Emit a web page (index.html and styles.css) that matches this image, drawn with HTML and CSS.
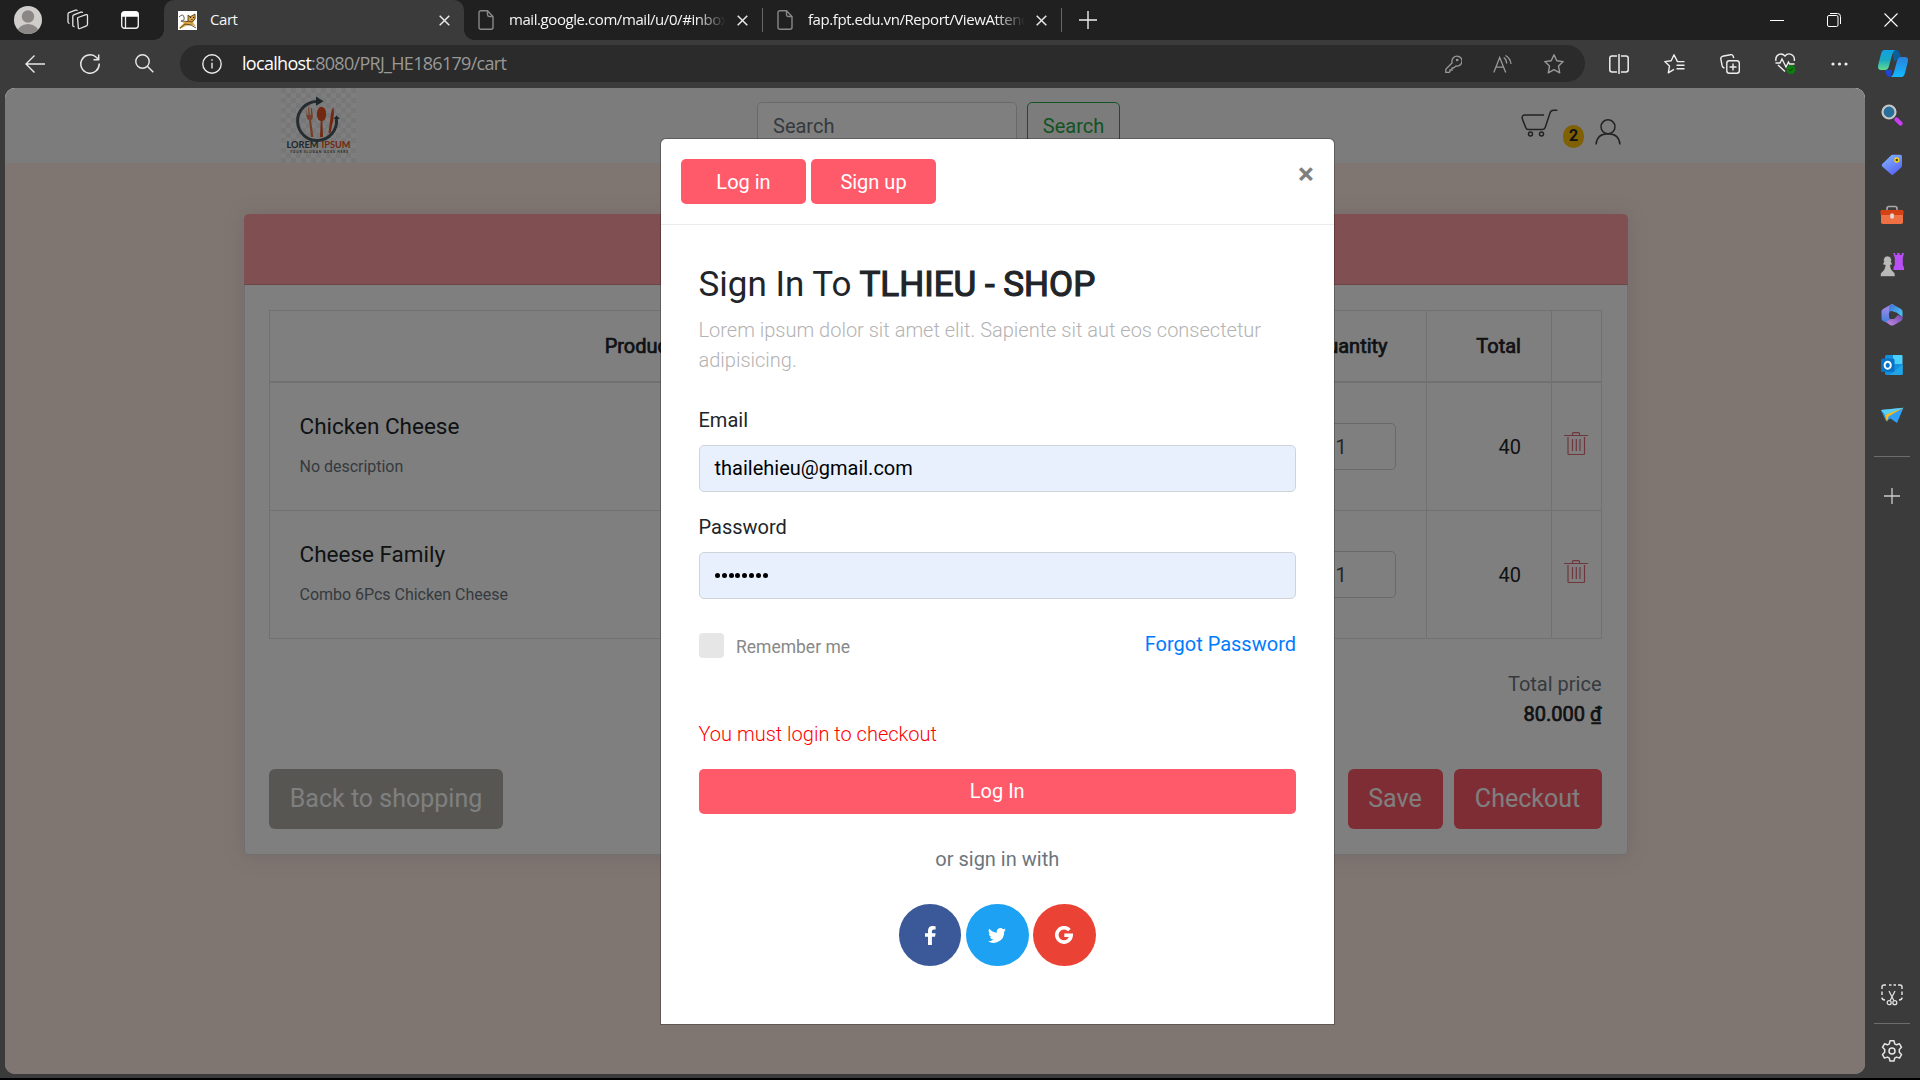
FILE: index.html
```html
<!DOCTYPE html>
<html lang="en">
<head>
<meta charset="utf-8">
<title>Cart</title>
<link rel="stylesheet" href="styles.css">
</head>
<body>
<div class="browser">
  <div class="tabbar">
    <div class="tab-tools">
      <svg class="avatar" width="28" height="28" viewBox="0 0 28 28"><defs><clipPath id="av"><circle cx="14" cy="14" r="14"/></clipPath></defs><g clip-path="url(#av)"><rect width="28" height="28" fill="#d0cecb"/><circle cx="14" cy="10.500" r="6.200" fill="#8b8784"/><ellipse cx="14" cy="27" rx="11" ry="9" fill="#8b8784"/></g></svg>
      <svg width="22" height="22" viewBox="0 0 22 22" fill="none" stroke="#e4e4e4" stroke-width="1.300" stroke-linejoin="round"><path d="M11 8.500l8-2.800q1.500-.4 1.500 1v8.500q0 1.200-1 1.600l-6.500 2.700q-1.700.6-1.700-1l-.7-8.600q-.1-1 .4-1.400z"/><path d="M7.500 17.500q-1.700.3-1.700-1.300V7.500q0-1.200 1-1.600l7-2.700q1.500-.5 1.700.8"/><path d="M2.500 14.500Q1 14 1 12.800V5.200Q1 4 2 3.600l6.500-2.400q1.500-.5 1.800.6"/></svg>
      <svg width="18" height="18" viewBox="0 0 18 18"><rect x=".7" y=".7" width="16.600" height="16.600" rx="2.800" fill="none" stroke="#eee" stroke-width="1.400"/><path d="M.5 5.800V3Q.5.500 3 .5h12q2.500 0 2.500 2.500v2.800z" fill="#fff"/><path d="M4.500 5v12" stroke="#eee" stroke-width="1.300"/></svg>
    </div>
    <div class="tab active">
      <svg width="19" height="19" viewBox="0 0 19 19"><rect width="19" height="19" fill="#fff"/><path d="M2 10q4 2 8-.5L10 4l3 1 4-2 .5 5-2.500 3.500 3 4-4-1.500-6 .8L2 18l-1-1 5-5z" fill="#d9a441"/><path d="M1 6q4-4 5 0t-3 4m7-6l2 2 5-3v5l-3 3-4-1zM2 17l5-4 6 1 5 3M3 10l7 .5" fill="none" stroke="#44351d" stroke-width=".8"/><path d="M12 6.500h1m2 0h1m-2.500 2h1" stroke="#222"/></svg>
      <span class="tab-title">Cart</span>
      <svg class="x" width="11" height="11" viewBox="0 0 11 11"><path d="M.7.7l9.600 9.600M10.300.7L.7 10.300"/></svg>
    </div>
    <div class="tab">
      <svg width="16" height="20" viewBox="0 0 16 20" fill="none" stroke="#888" stroke-width="1.400"><path d="M3 .8h6.500L15 6.500v10.700q0 2-2 2H3q-2 0-2-2V2.800q0-2 2-2zM9.500.8v4q0 1.700 1.700 1.700H15"/></svg>
      <span class="tab-title fade">mail.google.com/mail/u/0/#inbox</span>
      <svg class="x" width="11" height="11" viewBox="0 0 11 11"><path d="M.7.7l9.600 9.600M10.300.7L.7 10.300"/></svg>
    </div>
    <div class="tab">
      <svg width="16" height="20" viewBox="0 0 16 20" fill="none" stroke="#888" stroke-width="1.400"><path d="M3 .8h6.500L15 6.500v10.700q0 2-2 2H3q-2 0-2-2V2.800q0-2 2-2zM9.500.8v4q0 1.700 1.700 1.700H15"/></svg>
      <span class="tab-title fade">fap.fpt.edu.vn/Report/ViewAttend</span>
      <svg class="x" width="11" height="11" viewBox="0 0 11 11"><path d="M.7.7l9.600 9.600M10.300.7L.7 10.300"/></svg>
    </div>
    <svg class="newtab" width="18" height="18" viewBox="0 0 18 18" stroke="#eee" stroke-width="1.400"><path d="M9 0v18M0 9h18"/></svg>
    <div class="window-controls">
      <svg width="14" height="14" viewBox="0 0 14 14" stroke="#fff"><path d="M0 7.500h14"/></svg>
      <svg width="14" height="14" viewBox="0 0 14 14" fill="none" stroke="#fff"><rect x=".5" y="2.500" width="10.500" height="11" rx="1.500"/><path d="M3 .5h7.500q3 0 3 3V11"/></svg>
      <svg width="14" height="14" viewBox="0 0 14 14" stroke="#fff" stroke-width="1.100"><path d="M.5.5l13 13M13.500.5l-13 13"/></svg>
    </div>
  </div>

  <div class="toolbar">
    <div class="nav-buttons">
      <svg width="20" height="18" viewBox="0 0 20 18" fill="none" stroke="#e8e8e8" stroke-width="1.400"><path d="M20 9H1M9.500.5L1 9l8.500 8.500"/></svg>
      <svg width="20" height="20" viewBox="0 0 20 20" fill="none" stroke="#e8e8e8" stroke-width="1.500"><path d="M19.200 9.500A9.200 9.200 0 1 1 16.500 3.500L18.500 5.500M18.700.5v5.200h-5.200"/></svg>
      <svg width="19" height="19" viewBox="0 0 19 19" fill="none" stroke="#e8e8e8" stroke-width="1.400"><circle cx="7.500" cy="7.500" r="6.700"/><path d="M12.300 12.300l6 6"/></svg>
    </div>
    <div class="address">
      <svg width="20" height="20" viewBox="0 0 20 20" fill="none" stroke="#e8e8e8" stroke-width="1.400"><circle cx="10" cy="10" r="9.200"/><path d="M10 8.800v5.700M10 5.300v1.500"/></svg>
      <span class="url"><b>localhost</b>:8080/PRJ_HE186179/cart</span>
      <div class="address-tools">
        <svg width="17" height="18" viewBox="0 0 17 18" fill="none" stroke="#999" stroke-width="1.300"><path d="M7 6.500a5 5 0 1 1 4 4.500l-2.500 2H7v2H5v1.500l-1 1H.8v-3.200L7 8z"/><circle cx="12.200" cy="5" r=".7"/></svg>
        <svg width="20" height="18" viewBox="0 0 20 18" fill="none" stroke="#999" stroke-width="1.300"><path d="M.8 17.500L6.700 2.500l6 15M3 12.200h7.600M10.700 2.500q2.800 1.800 3 6M12.500.5q5 3 5.500 8.500"/></svg>
        <svg width="20" height="20" viewBox="0 0 20 20" fill="none" stroke="#999" stroke-width="1.400" stroke-linejoin="round"><path d="M10 .8l2.800 6 6.400.8-4.700 4.500 1.200 6.700-5.700-3.200-5.700 3.200 1.200-6.700L.8 7.600l6.400-.8z"/></svg>
      </div>
    </div>
    <div class="actions">
      <svg width="20" height="20" viewBox="0 0 20 20" fill="none" stroke="#eee" stroke-width="1.500"><path d="M8 2H3Q.8 2 .8 4.200v11.600Q.8 18 3 18h5M12 2h5q2.200 0 2.200 2.200v11.600q0 2.200-2.200 2.200h-5M10 0v20"/></svg>
      <svg width="21" height="20" viewBox="0 0 21 20" fill="none" stroke="#eee" stroke-width="1.400" stroke-linejoin="round"><path d="M20.500 7.600h-7L10 .8 7.200 6.800.8 7.600l4.700 4.500-1.200 6.700 5.700-3.500M12.500 11.200h8M12.500 14.800h8"/></svg>
      <svg width="20" height="20" viewBox="0 0 20 20" fill="none" stroke="#eee" stroke-width="1.400"><rect x="6.800" y="6.800" width="12.500" height="12.500" rx="2.500"/><path d="M13 9.500v7M9.500 13h7M4.500 14q-1.800-.3-2.300-2L.8 5Q.5 3 2.500 2.300l8-1.600q2.200-.3 2.700 1.500l.5 2"/></svg>
      <svg width="21" height="21" viewBox="0 0 21 21" fill="none" stroke="#eee" stroke-width="1.400"><path d="M1 8q-1-5 3-6.700 3.500-1.200 6 1.700 2.500-3 6-1.700Q20 3 19.300 8M3 12l7 6.500M.5 10H5l2-4 4 8 2.500-5 1 2h5"/><circle cx="16" cy="16.500" r="4.500" fill="#107c10" stroke="none"/><path d="M14 16.500l1.400 1.400 2.500-2.700" stroke="#0b360b" stroke-width="1"/></svg>
      <svg width="17" height="4" viewBox="0 0 17 4" fill="#eee"><circle cx="2" cy="2" r="1.600"/><circle cx="8.500" cy="2" r="1.600"/><circle cx="15" cy="2" r="1.600"/></svg>
    </div>
    <svg class="copilot" width="30" height="27" viewBox="0 0 30 27"><defs><linearGradient id="c1" x1="0" y1="0" x2="0" y2="1"><stop offset="0" stop-color="#0fa2e6"/><stop offset=".5" stop-color="#19a9c0"/><stop offset="1" stop-color="#63db91"/></linearGradient><linearGradient id="c2" x1="0" y1="0" x2="0" y2="1"><stop offset="0" stop-color="#2b80dc"/><stop offset="1" stop-color="#12baff"/></linearGradient></defs><path d="M14 0h4q3 0 3.700 3l1 3.500L16 12z" fill="#0a5f9b"/><path d="M7 20h7l-1.500 7q-3.500 0-4.200-3z" fill="#1d46d9"/><path d="M6.500 0H17q-2 1-3 5l-3 11q-1 4-4 4H3Q-.7 20 .2 15L3 4Q4 0 6.500 0z" fill="url(#c1)"/><path d="M23.500 27H13q2-1 3-5l3-11q1-4 4-4h4q3.700 0 2.800 5L27 23q-1 4-3.500 4z" fill="url(#c2)"/></svg>
  </div>

  <div class="workspace">
    <div class="viewport">
      <div class="site-header">
        <svg class="logo" width="75" height="75" viewBox="0 0 75 75"><defs><pattern id="chk" width="10" height="10" patternUnits="userSpaceOnUse"><rect width="10" height="10" fill="#fcfcfc"/><path d="M0 0h5v5H0zM5 5h5v5H5z" fill="#efefef"/></pattern></defs><rect width="75" height="75" fill="url(#chk)"/><path d="M36 13.500A19.500 19.500 0 1 0 55.500 31" fill="none" stroke="#4a5b62" stroke-width="3"/><path d="M35 8.500l7.500 4.800-7.500 4.500zM52.500 31l3-3.500 3.500 3.500z" fill="#3a4e55"/><g fill="#e65022"><path d="M25.500 20l1 7h1l-.5-7.500h1l1 7.500h1l-.3-7h1l1.300 8q0 3-2 4l2.500 17h-2.500L28 32q-2.500-1-2.500-4z" fill="#e87c55"/><ellipse cx="40.500" cy="26" rx="4.700" ry="7.300"/><path d="M39.800 32h1.500l.7 17h-3zM52.500 19q1.200 9-1.500 19l-1.500 7h-2l2-16q1-8 3-10z"/></g><text x="5.500" y="60" font-size="9" textLength="32" lengthAdjust="spacingAndGlyphs" class="logo-text dark">LOREM</text><text x="40.500" y="60" font-size="9" textLength="29" lengthAdjust="spacingAndGlyphs" class="logo-text orange">IPSUM</text><text x="9" y="64.500" font-size="3.200" textLength="58" class="logo-text dark">YOUR SLOGAN GOES HERE</text></svg>
        <div class="search">
          <div class="field search-field">Search</div>
          <div class="search-button">Search</div>
        </div>
        <div class="user-tools">
          <svg width="37" height="28" viewBox="0 0 37 28" fill="none" stroke="#444" stroke-width="1.500" stroke-linecap="round"><path d="M22.500 6H4Q.8 6 1.200 9.500l3.500 9q.7 2 2.500 2H21q2.500 0 3.200-2L29 4q.9-2.800 3.500-2.800h3.300"/><circle cx="9.500" cy="25" r="2"/><circle cx="20.500" cy="25" r="2"/></svg>
          <span class="count">2</span>
          <svg class="person" width="26" height="26" viewBox="0 0 26 26" fill="none" stroke="#444" stroke-width="1.500"><circle cx="13" cy="7.800" r="7"/><path d="M1 25.500q1-10.700 12-10.700t12 10.700"/></svg>
        </div>
      </div>

      <div class="card">
        <div class="card-head"></div>
        <div class="card-body">
          <div class="cart-table">
            <div class="row head"><div class="fx">Product Name &amp; Details</div><div></div><div class="fx">Quantity</div><div class="fx num">Total</div><div></div></div>
            <div class="row"><div><div class="item">Chicken Cheese</div><div class="desc">No description</div></div><div></div><div><div class="field qty">1</div></div><div class="num">40</div><div class="bin"><svg width="24" height="24" viewBox="0 0 24 24" fill="none" stroke="#dc6f7a" stroke-width="1.200"><path d="M0 3.500h24M8.500 3V1.700q0-1 1-1h5q1 0 1 1V3M4 5v16.500q0 1 1 1h14.500q1 0 1-1V5M8.500 7v12M12.300 7v12M16 7v12"/></svg></div></div>
            <div class="row"><div><div class="item">Cheese Family</div><div class="desc">Combo 6Pcs Chicken Cheese</div></div><div></div><div><div class="field qty">1</div></div><div class="num">40</div><div class="bin"><svg width="24" height="24" viewBox="0 0 24 24" fill="none" stroke="#dc6f7a" stroke-width="1.200"><path d="M0 3.500h24M8.500 3V1.700q0-1 1-1h5q1 0 1 1V3M4 5v16.500q0 1 1 1h14.500q1 0 1-1V5M8.500 7v12M12.300 7v12M16 7v12"/></svg></div></div>
          </div>
          <div class="total"><div class="muted">Total price</div><div class="fx">80.000 ₫</div></div>
          <div class="cart-actions"><div class="big back">Back to shopping</div><div class="big save">Save</div><div class="big checkout">Checkout</div></div>
        </div>
      </div>

      <div class="backdrop">
        <div class="modal">
          <div class="modal-head"><div class="btn">Log in</div><div class="btn">Sign up</div><span class="close">×</span></div>
          <div class="modal-body">
            <h1>Sign In To <span class="brand">TLHIEU - SHOP</span></h1>
            <p class="intro">Lorem ipsum dolor sit amet elit. Sapiente sit aut eos consectetur adipisicing.</p>
            <div class="label">Email</div>
            <div class="field filled">thailehieu@gmail.com</div>
            <div class="label second">Password</div>
            <div class="field filled dots"><i></i><i></i><i></i><i></i><i></i><i></i><i></i><i></i></div>
            <div class="options"><span class="check"></span><span class="remember">Remember me</span><span class="forgot">Forgot Password</span></div>
            <div class="error">You must login to checkout</div>
            <div class="btn wide">Log In</div>
            <div class="or">or sign in with</div>
            <div class="social">
              <div class="circle fb"><svg width="11" height="19" viewBox="0 0 11 19" fill="#fff"><path d="M3 19v-8.300H0V7.200h3V5Q3 0 7.600 0q1.600 0 3 .3v3.100H9Q6.900 3.400 6.900 5.200v2h3.700l-.6 3.500H6.900V19z"/></svg></div>
              <div class="circle tw"><svg width="18" height="15" viewBox="0 0 24 20" fill="#fff"><path d="M24 2.400a10 10 0 0 1-2.800.8A5 5 0 0 0 23.300.5a10 10 0 0 1-3.100 1.200 4.900 4.900 0 0 0-8.400 4.500A14 14 0 0 1 1.700 1a4.900 4.900 0 0 0 1.500 6.600 5 5 0 0 1-2.200-.6c0 2.300 1.600 4.400 3.900 4.900a5 5 0 0 1-2.200.1 4.900 4.900 0 0 0 4.600 3.400A10 10 0 0 1 0 17.500 14 14 0 0 0 21.500 5 10 10 0 0 0 24 2.400z"/></svg></div>
              <div class="circle gg"><svg width="18" height="18" viewBox="0 0 18 18" fill="none" stroke="#fff" stroke-width="3.600"><path d="M14.400 4.100A7.200 7.200 0 1 0 16.200 9.200H9.300"/></svg></div>
            </div>
          </div>
        </div>
      </div>
    </div>

    <div class="sidebar">
      <div class="slot"><svg width="22" height="22" viewBox="0 0 22 22"><circle cx="8" cy="8" r="6.500" fill="#28709a" stroke="#c7c7c7" stroke-width="2.200"/><path d="M15.500 15.500l4 4" stroke="#cc3cf5" stroke-width="4.200" stroke-linecap="round"/></svg></div>
      <div class="slot"><svg width="22" height="22" viewBox="0 0 22 22"><defs><linearGradient id="tg" x1="0" y1="0" x2=".6" y2="1"><stop stop-color="#83bcff"/><stop offset="1" stop-color="#5a66f2"/></linearGradient></defs><path d="M12 .8h7.500Q21 .8 21 2.500v9q0 1.200-.8 2l-7.500 6.800q-1.500 1.200-2.700 0L1.200 12.500q-1-1.200 0-2.500L9.500 1.900q1-1.100 2.500-1.100z" fill="url(#tg)"/><circle cx="15.800" cy="6" r="2" fill="#4a4a20" stroke="#ffd21c" stroke-width="1.300"/></svg></div>
      <div class="slot"><svg width="24" height="20" viewBox="0 0 24 20"><path d="M7 6V3.500Q7 1.500 9 1.500h6q2 0 2 2V6" fill="none" stroke="#a9a9a9" stroke-width="1.600"/><rect x="1" y="8" width="22" height="11" rx="1.800" fill="#ef7043"/><rect x=".5" y="5" width="23" height="5" rx="1" fill="#d64213"/><rect x="10.300" y="8.500" width="3.500" height="5" rx="1" fill="#ddd"/></svg></div>
      <div class="slot"><svg width="24" height="24" viewBox="0 0 24 24"><path d="M13.200 0h2v2h2V0h2.500v2h2V0H24l-1.200 5v7l1.200 2.500V17H13.500v-2.500L14.800 12V5z" fill="#b950f5"/><path d="M4 9a4 4 0 1 1 7 0l1 1v2h-1.800q.3 4.500 2.800 6.500 2 1 2 3v2H.5v-2q0-2 2-3Q5 16.500 5.300 12H3v-2z" fill="#b9b9b7" stroke="#3b3b3b" stroke-width=".6"/></svg></div>
      <div class="slot"><svg width="22" height="22" viewBox="0 0 22 22"><defs><linearGradient id="m1" x1="0" y1="0" x2="0" y2="1"><stop stop-color="#b48be8"/><stop offset="1" stop-color="#3f7fdc"/></linearGradient><linearGradient id="m2" x1="0" y1="0" x2="1" y2="1"><stop stop-color="#3f6fd8"/><stop offset="1" stop-color="#4ad0f5"/></linearGradient><linearGradient id="m3" x1="0" y1="1" x2="1" y2="0"><stop stop-color="#c58bea"/><stop offset="1" stop-color="#6f4aa8"/></linearGradient></defs><path d="M11 0L2 5Q.5 6 .5 7.500v7q0 1.500 1.500 2.500l3 1.500 3.500-2.500V7.500L13 1z" fill="url(#m1)"/><path d="M9 1q2-1.200 4 0l7 4q1.500 1 1.500 2.500V13l-6-4.500L8 7V3z" fill="url(#m2)"/><path d="M5 18l4-3h4l4-4 4.500 1v2.500q0 1.500-1.500 2.500l-7 4q-2 1-4 0z" fill="url(#m3)"/><path d="M11 7l3.500 2v4L11 15l-3-2V9z" fill="#3b3b3b"/></svg></div>
      <div class="slot"><svg width="22" height="20" viewBox="0 0 22 20"><rect x="4" width="17" height="20" rx="1.500" fill="#1490df"/><path d="M12 0h8.500q1 0 1 1v8H12z" fill="#4ad0fa"/><path d="M21.800 9v10q0 1-1 1H9z" fill="#20a5e8"/><rect y="3.500" width="13.500" height="13.500" rx="1.500" fill="#0872c7"/><ellipse cx="6.700" cy="10.200" rx="3.100" ry="3.500" fill="none" stroke="#fff" stroke-width="1.900"/></svg></div>
      <div class="slot"><svg width="23" height="17" viewBox="0 0 23 17"><path d="M0 3L22.500.8 16 16 9.500 11.500 5 14z" fill="#2e9ff5"/><path d="M0 3L22.500.8 4.500 8z" fill="#58cff6"/><path d="M4 8L22.500.8 7.500 9.500 6 15z" fill="#f8ba1d"/></svg></div>
      <span class="rule"></span>
      <svg class="add" width="16" height="16" viewBox="0 0 16 16" stroke="#ccc" stroke-width="1.300"><path d="M8 0v16M0 8h16"/></svg>
      <svg class="snip" width="22" height="22" viewBox="0 0 22 22" fill="none" stroke="#e5e5e5" stroke-width="1.400"><path d="M1 5V3q0-2 2-2h2M8 1h2.500M12.500 1H15M17 1h2q2 0 2 2v2M1 7.500V11M21 7.500V11M1 13.500q0 2.500 3 2.500M21 13.500q0 2.500-3 2.500"/><path d="M8 7l4.800 9.500M14 7L9.200 16.500" stroke-width="1.200"/><circle cx="8.200" cy="18.700" r="2" stroke-width="1.200"/><circle cx="13.800" cy="18.700" r="2" stroke-width="1.200"/></svg>
      <span class="rule low"></span>
      <svg class="gear" width="22" height="22" viewBox="0 0 22 22" fill="none" stroke="#e5e5e5" stroke-width="1.500" stroke-linejoin="round"><path d="M9 .8h4l.7 3 1.800 1 3-1 2 3.500-2.200 2.200v2.800l2.200 2.300-2 3.500-3-1-1.800 1-.7 3H9l-.7-3-1.800-1-3 1-2-3.500 2.200-2.300V9.500L1.500 7.300l2-3.500 3 1 1.800-1z"/><circle cx="11" cy="11" r="3"/></svg>
    </div>
  </div>
</div>
</body>
</html>
```
FILE: styles.css
```css
* { box-sizing: border-box; }
body { margin: 0; background: #000; font: 20px/30px Roboto, sans-serif; color: #212529; overflow: hidden; }
svg { display: block; flex: none; }
.browser { width: 1920px; height: 1078px; display: flex; flex-direction: column; background: #3b3b3b; }

/* Tab strip */
.tabbar { height: 40px; flex: none; display: flex; align-items: center; background: #202020; color: #f5f5f5; font: 15px/20px "Open Sans", sans-serif; }
.tab-tools { width: 164px; height: 40px; display: flex; align-items: center; padding-left: 14px; gap: 25px; background: radial-gradient(circle at 0 0, transparent 9.5px, #3b3b3b 10px) right bottom / 10px 10px no-repeat; }
.tab-tools svg:last-child { margin-left: 7px; }
.tab { height: 24px; width: 299px; display: flex; align-items: center; padding: 0 14px; border-right: 1px solid #666; }
.tab.active { height: 40px; width: 300px; background: #3b3b3b; border: 0; border-radius: 10px 10px 0 0; }
.tab.active .tab-title { margin-left: 13px; }
.tab.active + .tab { height: 40px; border: 0; padding-right: 15px; background: radial-gradient(circle at 100% 0, transparent 9.5px, #3b3b3b 10px) left bottom / 10px 10px no-repeat, linear-gradient(#666, #666) right center / 1px 24px no-repeat; }
.tab-title { flex: 1; white-space: nowrap; overflow: hidden; margin: -2px 0 0 15px; letter-spacing: -.43px; }
.fade { margin-right: 11px; -webkit-mask-image: linear-gradient(to right, #000 86%, transparent 100%); mask-image: linear-gradient(to right, #000 86%, transparent 100%); }
.x { stroke: #e8e8e8; stroke-width: 1.5; }
.newtab { margin-left: 17px; }
.window-controls { margin-left: auto; display: flex; gap: 43px; padding-right: 22px; }

/* Navigation bar */
.toolbar { height: 48px; flex: none; display: flex; align-items: center; padding-bottom: 1px; }
.nav-buttons { width: 180px; display: flex; align-items: center; padding-left: 25px; gap: 35px; }
.address { width: 1405px; height: 37px; border-radius: 19px; background: #2b2b2b; display: flex; align-items: center; padding: 0 21px 0 22px; }
.url { margin: -2px 0 0 20px; font: 18px/24px "Open Sans", sans-serif; letter-spacing: -.7px; color: #999; }
.url b { font-weight: 400; color: #fff; }
.address-tools { margin-left: auto; display: flex; align-items: center; gap: 31px; }
.actions { display: flex; align-items: center; gap: 35px; margin-left: 24px; }
.copilot { margin-left: 30px; }

.workspace { flex: 1; display: flex; padding-left: 5px; }
.viewport { position: relative; width: 1860px; height: 986px; border-radius: 10px; overflow: hidden; background: #ffece2; }

/* Site header */
.site-header { height: 75px; background: #f8f8f8; display: flex; }
.logo { margin-left: 276px; }
.logo-text { font-family: Lato, sans-serif; font-weight: 700; }
.dark { fill: #3d4e55; }
.orange { fill: #e65022; }
.search { display: flex; margin-left: 401px; padding-top: 14px; gap: 10px; }
.field { height: 47px; border: 1px solid #ced4da; border-radius: 5px; padding: 7px 15px; background: #fff; }
.search-field { width: 260px; color: #6c757d; padding-top: 8px; }
.search-button { width: 93px; height: 47px; border: 1px solid #28a745; border-radius: 5px; color: #28a745; text-align: center; line-height: 47px; }
.user-tools { margin-left: 401px; padding-top: 21px; display: flex; align-items: flex-start; }
.count { margin: 16px 11px 0 5px; width: 21px; height: 23px; border-radius: 11px; background: #ffc107; font: 700 16px/22px Roboto, sans-serif; text-align: center; }
.person { margin-top: 10px; }

/* Cart card */
.card { width: 1384px; height: 641px; margin: 51px 0 0 238.5px; background: #fff; border: 1px solid #e0e0e0; border-top: 0; border-radius: 5px; box-shadow: 0 1px 22px 3px rgba(60, 0, 104, .09); }
.card-head { height: 71px; margin: 0 -1px; background: #ff9fa5; border-bottom: 1px solid #df8b91; border-radius: 5px 5px 0 0; }
.card-body { padding: 25px 25px 25px 24.5px; }
.cart-table { border: 1px solid #dee2e6; border-bottom: 0; width: 1333px; }
.row { display: grid; grid-template-columns: 882px 123px 152px 125px 49px; height: 128px; border-bottom: 1px solid #dee2e6; }
.row > div { padding: 0 30px 0 29.5px; display: flex; flex-direction: column; justify-content: center; border-right: 1px solid #dee2e6; }
.row > div:last-child { border-right: 0; padding: 0; }
.row.head { height: 72px; border-bottom-width: 2px; text-align: center; }
.row.head > div { padding: 0 25px; }
.row .num, .row.head .num { text-align: right; padding-right: 30px; }
.fx { -webkit-text-stroke: .7px currentColor; }
.item { font-size: 22.5px; line-height: 28px; margin-bottom: 15px; margin-top: -3px; }
.desc { font-size: 16px; line-height: 24px; color: #6c757d; letter-spacing: -.02px; }
.qty { width: 91px; color: #495057; padding: 8px 0 0 30px; }
.row .bin { align-items: center; padding: 0 1px 5px 0 !important; }
.total { text-align: right; margin-top: 30px; color: #212529; }
.muted { color: #6c757d; }
.cart-actions { display: flex; margin-top: 40px; }
.big { height: 60px; border-radius: 6px; color: #fff; font-size: 25px; line-height: 60px; text-align: center; }
.back { width: 234px; background: #aeaca6; margin-right: auto; }
.save { width: 95px; background: #ff5a6a; margin-right: 11px; }
.checkout { width: 148px; background: #ff5a6a; }

/* Sign-in dialog */
.backdrop { position: absolute; inset: 0; background: rgba(0, 0, 0, .5); padding-top: 51px; }
.modal { width: 673px; height: 885px; margin-left: 656px; background: #fff; border-radius: 5px 5px 0 0; box-shadow: 0 0 0 1px rgba(0, 0, 0, .25); }
.modal-head { height: 86px; display: flex; padding: 20px 20px 0; gap: 5px; border-bottom: 1px solid #e9ecef; }
.btn { width: 125px; height: 45px; background: #ff5a6a; border-radius: 5px; color: #fff; line-height: 46px; text-align: center; }
.close { margin: 0 0 0 auto; font: 700 30px/30px Roboto, sans-serif; color: #7f7f7f; }
.modal-body { padding: 38px 38px 0 37.5px; }
h1 { margin: 0; font-weight: 400; font-size: 35px; line-height: 43px; white-space: nowrap; }
.brand { -webkit-text-stroke: 1.2px currentColor; }
.intro { margin: 9px 0 30px; font-weight: 300; color: #b3b3b3; }
.label { margin-bottom: 10px; }
.label.second { margin-top: 20px; }
.filled { background: #e8f0fe; color: #000; }
.dots { display: flex; align-items: center; gap: 1.8px; padding-left: 15.5px; }
.dots i { width: 5px; height: 5px; border-radius: 50%; background: #000; }
.options { display: flex; height: 25px; margin-top: 34px; align-items: center; }
.check { width: 25px; height: 25px; border-radius: 4px; background: #e6e6e6; }
.remember { margin: 2px 0 0 12.5px; font-size: 17.5px; color: #888; }
.forgot { margin: -4px 0 0 auto; color: #007bff; }
.error { margin: 61px 0 20px; font-weight: 300; color: #f00; }
.wide { width: auto; line-height: 44px; }
.or { margin: 30px 0; text-align: center; color: #6c757d; }
.social { display: flex; justify-content: center; gap: 4.6px; }
.circle { width: 62.5px; height: 62px; border-radius: 50%; display: flex; align-items: center; justify-content: center; }
.fb { background: #3b5998; }
.tw { background: #1da1f2; }
.gg { background: #ea4335; }

/* Edge sidebar */
.sidebar { width: 55px; height: 986px; display: flex; flex-direction: column; align-items: center; padding: 2px 1px 0 0; }
.slot { height: 50px; display: flex; align-items: center; }
.rule { width: 36px; height: 1px; background: #6d6d6d; margin: 16px 0 31px; flex: none; }
.sidebar .add { margin-bottom: auto; }
.sidebar .snip { margin-bottom: 17px; }
.rule.low { margin: 0 0 16px; }
.sidebar .gear { margin-bottom: 12px; }
```
